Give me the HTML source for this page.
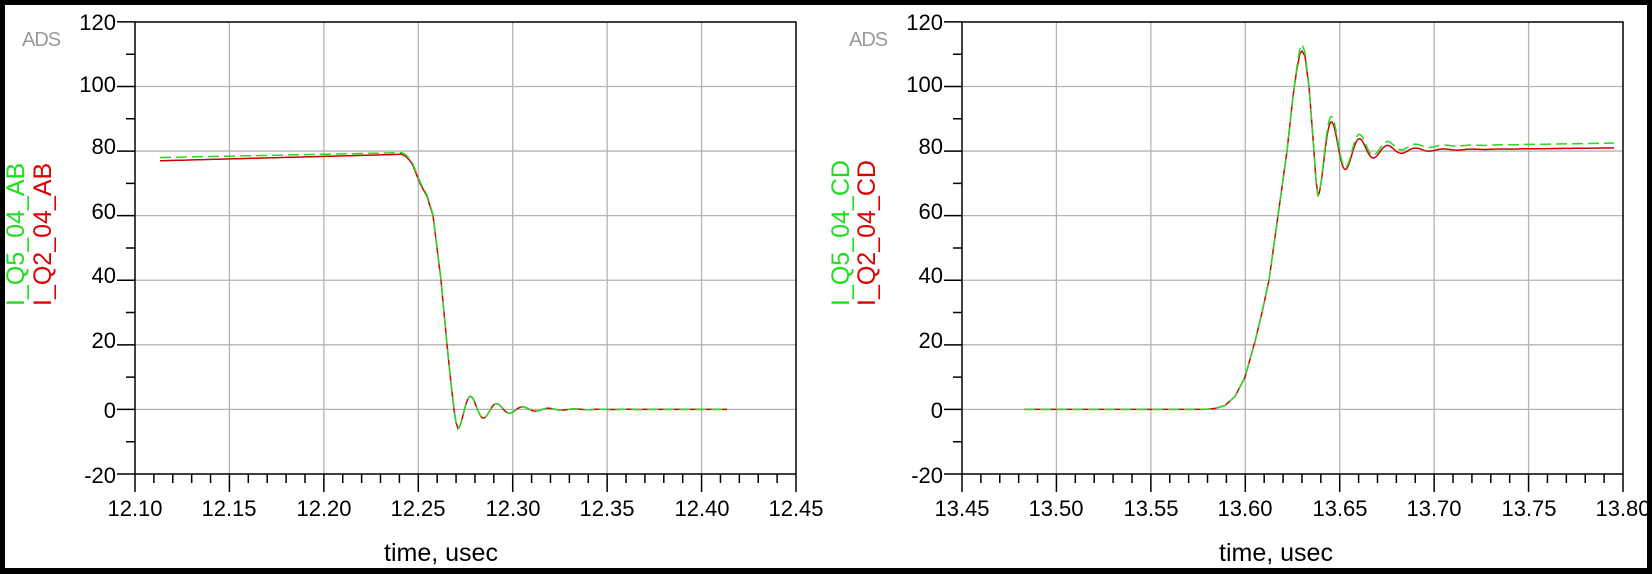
<!DOCTYPE html>
<html><head><meta charset="utf-8"><style>
html,body{margin:0;padding:0;background:#000;}
#w{position:absolute;left:0;top:0;width:1652px;height:574px;overflow:hidden;background:#000}
svg{position:absolute;left:0;top:0}
text{font-family:"Liberation Sans",Arial,sans-serif;}
</style></head><body><div id="w">
<svg width="1652" height="574" viewBox="0 0 1652 574">
<rect x="5" y="5" width="1642" height="563" fill="#fff"/>
<g id="grids" stroke="#b4b4b4" stroke-width="1.3" fill="none"></g>
<g id="axes" stroke="#000" stroke-width="1.5" fill="none"></g>
<g font-size="22" fill="#000" text-anchor="end">
<text x="116" y="30">120</text><text x="116" y="92">100</text><text x="116" y="154">80</text><text x="116" y="219">60</text><text x="116" y="283">40</text><text x="116" y="348">20</text><text x="116" y="418">0</text><text x="116" y="483">-20</text>
<text x="943" y="30">120</text><text x="943" y="92">100</text><text x="943" y="154">80</text><text x="943" y="219">60</text><text x="943" y="283">40</text><text x="943" y="348">20</text><text x="943" y="418">0</text><text x="943" y="483">-20</text>
</g>
<g font-size="22" fill="#000" text-anchor="middle">
<text x="135" y="516">12.10</text><text x="229" y="516">12.15</text><text x="324" y="516">12.20</text><text x="418" y="516">12.25</text><text x="513" y="516">12.30</text><text x="607" y="516">12.35</text><text x="702" y="516">12.40</text><text x="796" y="516">12.45</text>
<text x="962" y="516">13.45</text><text x="1056" y="516">13.50</text><text x="1151" y="516">13.55</text><text x="1245" y="516">13.60</text><text x="1340" y="516">13.65</text><text x="1434" y="516">13.70</text><text x="1529" y="516">13.75</text><text x="1623" y="516">13.80</text>
<text x="441" y="561" font-size="25">time, usec</text><text x="1276" y="561" font-size="25">time, usec</text>
</g>
<g font-size="20" fill="#9a9a9a" style="letter-spacing:-1px">
<text x="22" y="46">ADS</text><text x="849" y="46">ADS</text>
</g>
<g font-size="25">
<text transform="translate(24,306) rotate(-90)" fill="#1de01d">I_Q5_04_AB</text>
<text transform="translate(51,306) rotate(-90)" fill="#e00000">I_Q2_04_AB</text>
<text transform="translate(849,306) rotate(-90)" fill="#1de01d">I_Q5_04_CD</text>
<text transform="translate(875,306) rotate(-90)" fill="#e00000">I_Q2_04_CD</text>
</g>
<path id="rL" fill="none" stroke="#d40000" stroke-width="1.5"/>
<path id="gL" fill="none" stroke="#22dd22" stroke-width="1.5" stroke-dasharray="11 5"/>
<path id="rR" fill="none" stroke="#d40000" stroke-width="1.5"/>
<path id="gR" fill="none" stroke="#22dd22" stroke-width="1.5" stroke-dasharray="11 5"/>
</svg></div>
<script>
var Y=function(v){return 409.4-v*3.229};
var g='',a='';
[[135,796],[962,1623]].forEach(function(p){
 var L=p[0],R=p[1],s=(R-L)/35;
 for(var i=1;i<7;i++){var x=L+i*5*s;g+='M'+x+' 22V474';}
 for(var v=0;v<=100;v+=20){var y=Y(v);g+='M'+L+' '+y+'H'+R;}
 a+='M'+L+' 22H'+R+'V474H'+L+'Z';
 for(var v=-20;v<=120;v+=10){var y=Y(v);a+='M'+(L-(v%20==0?18:9))+' '+y+'H'+L;}
 for(var i=0;i<=35;i++){var x=L+i*s;a+='M'+x+' 474v'+(i%5==0?18:9);}
});
document.getElementById('grids').innerHTML='<path d="'+g+'"/>';
document.getElementById('axes').innerHTML='<path d="'+a+'"/>';
function interp(pts,x){for(var i=0;i<pts.length-1;i++){if(x<=pts[i+1][0]){var t=(x-pts[i][0])/(pts[i+1][0]-pts[i][0]);return pts[i][1]+(pts[i+1][1]-pts[i][1])*t;}}return pts[pts.length-1][1];}
function build(f,x0,x1){var d='';for(var x=x0;x<=x1;x+=1){d+=(x==x0?'M':'L')+x+' '+Y(f(x)).toFixed(1);}return d;}
var fall=[[402,0],[406,-0.7],[410,-2],[413,-3.5],[420,-9],[427,-13],[433,-19],[437,-29],[441,-39],[447,-59],[451,-71],[454,-79],[456,-83],[458,-85]];
function left(x,base){if(x<=402)return base(x);if(x<458)return base(402)+interp(fall,x)*(base(402)/79);var u=x-458;return -6*Math.exp(-u/32)*Math.cos(2*Math.PI*u/26);}
document.getElementById('rL').setAttribute('d',build(function(x){return left(x,function(x){return 77+(x-160)/242*2;});},160,727));
document.getElementById('gL').setAttribute('d',build(function(x){return left(x,function(x){return 78+(x-160)/242*1.5;});},160,727));
var rise=[[1205,0],[1215,0.3],[1225,1.2],[1235,4],[1245,10],[1255,21],[1262,30],[1269,40],[1278,60],[1287,80],[1293,97],[1297,106],[1300,111],[1302,112],[1305,110],[1309,100],[1313,84],[1316,71],[1318,66]];
function right(x,pk,m0,m1){if(x<1205)return 0;if(x<1318){var v=interp(rise,x);if(x>1294&&x<1310)v+=(pk-112)*Math.max(0,1-Math.abs(x-1302)/8);return v;}var u=x-1318;var m=m0+(m1-m0)*Math.min(1,u/300);return m-(m-66)*Math.exp(-u/31)*Math.cos(2*Math.PI*u/28);}
document.getElementById('rR').setAttribute('d',build(function(x){return right(x,111,80,81);},1024,1614));
document.getElementById('gR').setAttribute('d',build(function(x){return right(x,113,81,82.5);},1024,1614));
</script>
</body></html>
